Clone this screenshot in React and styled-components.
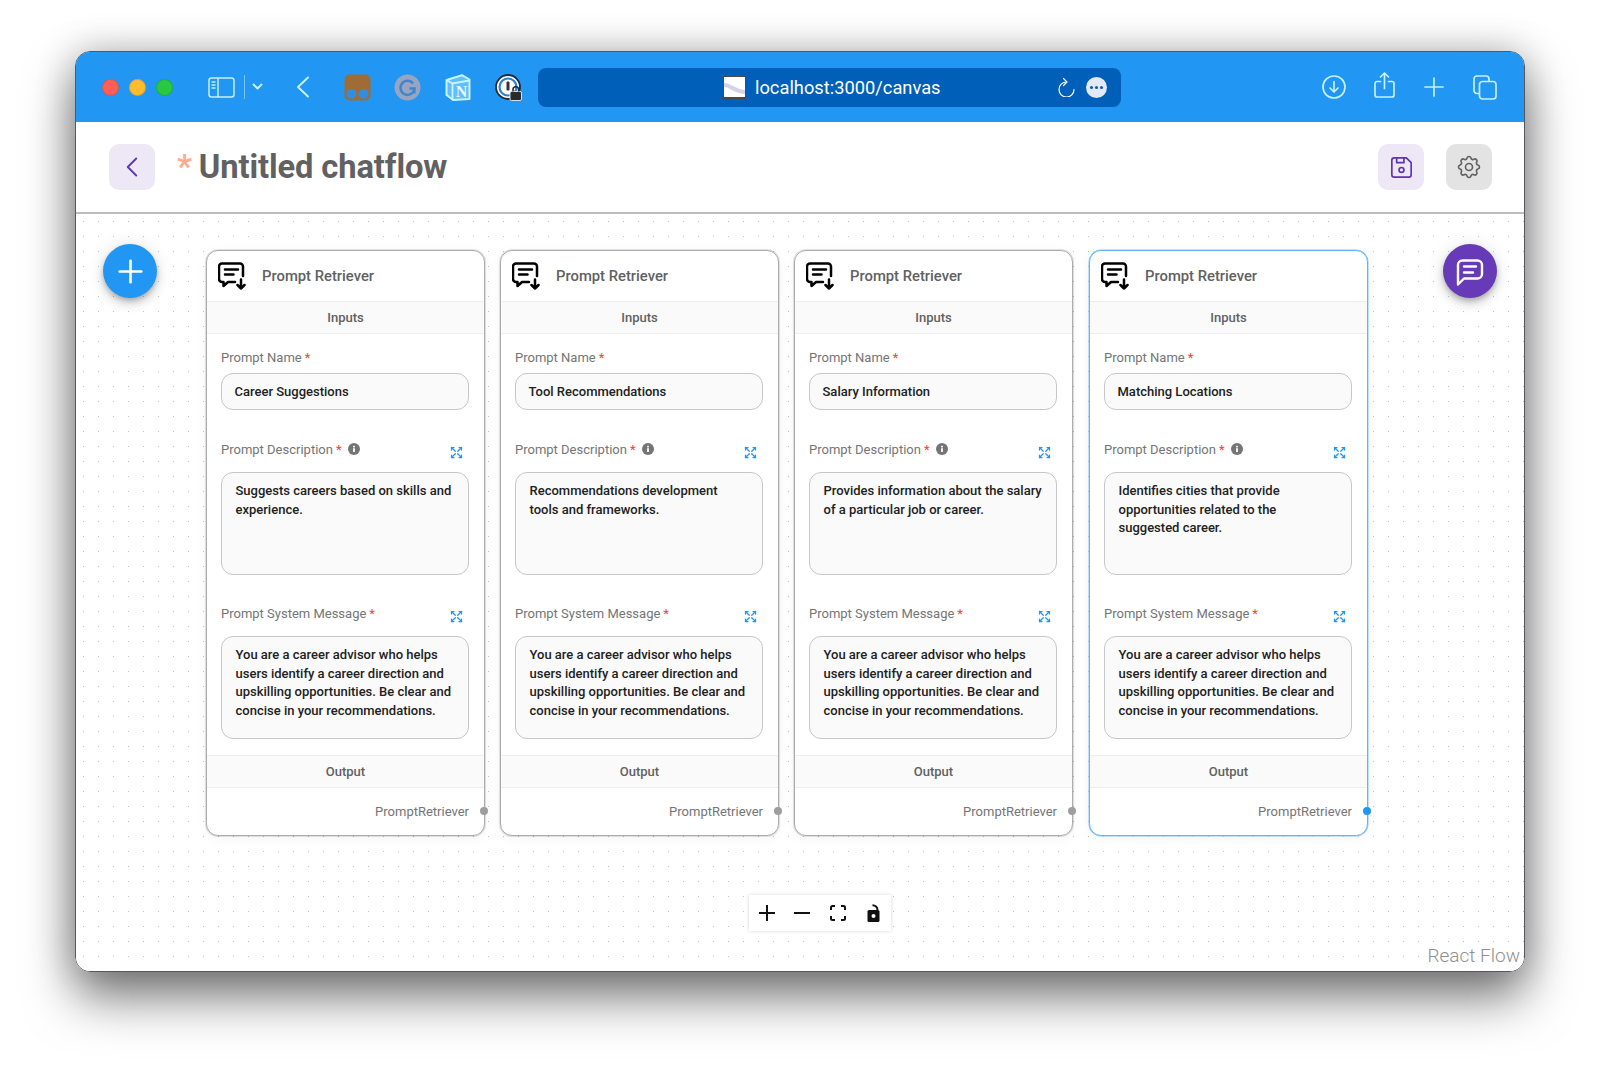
import React from 'react';
import styled, { createGlobalStyle } from 'styled-components';
import { TbArrowsMaximize, TbChevronLeft, TbDeviceFloppy, TbPlus, TbSettings } from 'react-icons/tb';

const GlobalStyle = createGlobalStyle`
  html, body {
    margin: 0;
    padding: 0;
    background: #ffffff;
  }
  body {
    font-family: Roboto, "Liberation Sans", sans-serif;
  }
  * {
    box-sizing: border-box;
  }
`;

const Page = styled.div`
  width: 1600px;
  height: 1071px;
  padding: 51px 0 0 75px;
  overflow: hidden;
`;

const WinShadow = styled.div`
  width: 1450px;
  height: 921px;
  border-radius: 15px;
  box-shadow: 0 26px 50px rgba(0, 0, 0, 0.5), 0 0 38px rgba(0, 0, 0, 0.24);
`;

const Win = styled.div`
  width: 1450px;
  height: 921px;
  display: flex;
  flex-direction: column;
  border: 1px solid #55595e;
  border-radius: 15px;
  overflow: hidden;
  background: #ffffff;
`;

const TitleBar = styled.div`
  height: 70px;
  flex: none;
  display: flex;
  align-items: center;
  padding-left: 26px;
  background: #2196f3;
  color: #c5f1ff;
`;

const Lights = styled.div`
  display: flex;
  gap: 10px;
  margin-right: 35px;
`;

const Light = styled.span`
  width: 17px;
  height: 17px;
  border-radius: 50%;
  background: ${(p) => p.$color};
  border: 1px solid rgba(0, 0, 0, 0.12);
`;

const ToolIcon = styled.div`
  display: flex;
  align-items: center;
  justify-content: center;
  flex: none;
  width: ${(p) => p.$w}px;
  margin-left: ${(p) => p.$ml || 0}px;
  margin-top: ${(p) => p.$mt || 0}px;
`;

const VDivider = styled.span`
  width: 1px;
  height: 24px;
  margin-left: 9px;
  background: rgba(201, 239, 255, 0.5);
`;

const AddressBar = styled.div`
  width: 583px;
  height: 39px;
  margin-left: 16px;
  flex: none;
  display: flex;
  align-items: center;
  padding-left: 185px;
  border-radius: 8px;
  background: #005fb8;
  color: #ffffff;
`;

const Favicon = styled.div`
  width: 23px;
  height: 23px;
  flex: none;
  margin-right: 9px;
  background: #ffffff;
  border: 1px solid #4a4a4a;
  border-bottom-width: 2px;
  overflow: hidden;
`;

const Url = styled.span`
  width: 303px;
  flex: none;
  font-size: 18.3px;
  white-space: nowrap;
`;

const MoreDots = styled.div`
  width: 21px;
  height: 21px;
  margin-left: 11px;
  border-radius: 50%;
  background: #e3e9f6;
  display: flex;
  align-items: center;
  justify-content: center;
  gap: 2px;
`;

const Dot = styled.span`
  width: 3px;
  height: 3px;
  border-radius: 50%;
  background: #005fb8;
`;

const HeaderBar = styled.div`
  height: 92px;
  flex: none;
  display: flex;
  align-items: center;
  padding: 0 32px 0 33px;
  border-bottom: 2px solid #bdbdbd;
  background: #ffffff;
`;

const SquareButton = styled.div`
  width: 46px;
  height: 46px;
  flex: none;
  margin-left: ${(p) => p.$ml || 0}px;
  display: flex;
  align-items: center;
  justify-content: center;
  border-radius: 10px;
  background: ${(p) => (p.$grey ? '#e3e3e3' : '#ede7f6')};
  color: ${(p) => (p.$grey ? '#616161' : '#5e35b1')};
`;

const Title = styled.h1`
  flex: 1;
  margin: 0 0 0 22px;
  font-size: 32.7px;
  line-height: 40px;
  font-weight: 700;
  color: #616161;
  letter-spacing: -0.1px;
  span {
    color: #ffab91;
    margin-right: 7px;
  }
`;

const Canvas = styled.div`
  position: relative;
  flex: 1;
  display: flex;
  gap: 15px;
  padding: 36px 0 0 130px;
  background-color: #ffffff;
  background-image: radial-gradient(circle at center, #c2c2c2 0.7px, transparent 1px);
  background-size: 15px 15px;
`;

const Fab = styled.div`
  position: absolute;
  top: 30px;
  ${(p) => (p.$right ? 'right: 27px;' : 'left: 27px;')}
  width: 54px;
  height: 54px;
  display: flex;
  align-items: center;
  justify-content: center;
  border-radius: 50%;
  background: ${(p) => (p.$right ? '#673ab7' : '#2196f3')};
  color: #ffffff;
  box-shadow: 0 3px 5px -1px rgba(0, 0, 0, 0.2), 0 6px 10px 0 rgba(0, 0, 0, 0.14), 0 1px 18px 0 rgba(0, 0, 0, 0.12);
`;

const Card = styled.div`
  position: relative;
  width: 279px;
  height: 586px;
  margin-left: ${(p) => (p.$selected ? 1 : 0)}px;
  flex: none;
  display: flex;
  flex-direction: column;
  border: 1px solid ${(p) => (p.$selected ? '#64b5f6' : '#acacac')};
  border-radius: 12px;
  background: #ffffff;
  box-shadow: ${(p) => (p.$selected ? '0 0 0 0.5px #90caf9' : '0 0 0 1px rgba(0, 0, 0, 0.1)')},
    0 2px 12px rgba(0, 0, 0, 0.05);
`;

const CardHeader = styled.div`
  height: 50px;
  flex: none;
  display: flex;
  align-items: center;
  padding: 0 0 0 11px;
  font-size: 14.8px;
  font-weight: 500;
  color: #616161;
`;

const CardName = styled.span`
  margin-left: 15px;
`;

const SectionBar = styled.div`
  height: 33px;
  flex: none;
  display: flex;
  align-items: center;
  justify-content: center;
  background: #fafafa;
  border-top: 1px solid #eeeeee;
  border-bottom: 1px solid #eeeeee;
  font-size: 13px;
  font-weight: 500;
  color: #616161;
`;

const Fields = styled.div`
  flex: 1;
  display: flex;
  flex-direction: column;
  padding: 13px 15px 16px 14px;
`;

const LabelRow = styled.div`
  height: 20px;
  display: flex;
  align-items: center;
  gap: 6px;
  margin-top: ${(p) => p.$mt || 0}px;
  margin-bottom: ${(p) => p.$mb}px;
  font-size: 13px;
  color: #757575;
`;

const Required = styled.span`
  color: #f44336;
  margin-left: 3px;
`;

const ExpandButton = styled.span`
  margin-left: auto;
  margin-right: 5px;
  margin-top: 6px;
  display: flex;
  color: #2196f3;
`;

const InputBox = styled.div`
  height: 37px;
  display: flex;
  align-items: center;
  padding: 0 12.5px;
  border: 1px solid #c7c7c7;
  border-radius: 12px;
  background: #fafafa;
  font-size: 13px;
  font-weight: 500;
  color: #212121;
`;

const TextBox = styled.div`
  height: 103px;
  padding: 9px 12.5px 9px 13.5px;
  border: 1px solid #c7c7c7;
  border-radius: 12px;
  background: #fafafa;
  font-size: 13px;
  line-height: 18.6px;
  font-weight: 500;
  color: #212121;
`;

const OutputRow = styled.div`
  flex: 1;
  display: flex;
  align-items: flex-start;
  justify-content: flex-end;
  padding: 15px 15px 0 0;
  font-size: 13px;
  line-height: 18px;
  color: #757575;
`;

const Handle = styled.span`
  position: absolute;
  right: -4px;
  bottom: 20px;
  width: 8px;
  height: 8px;
  border-radius: 50%;
  background: ${(p) => (p.$selected ? '#2196f3' : '#9e9e9e')};
`;

const Controls = styled.div`
  position: absolute;
  left: 673px;
  bottom: 40px;
  width: 142px;
  height: 36px;
  display: grid;
  grid-template-columns: repeat(4, 1fr);
  background: #ffffff;
  box-shadow: 0 0 4px rgba(0, 0, 0, 0.16);
`;

const ControlButton = styled.div`
  display: flex;
  align-items: center;
  justify-content: center;
`;

const Attribution = styled.div`
  position: absolute;
  right: 4px;
  bottom: 2px;
  font-size: 19px;
  line-height: 26px;
  font-weight: 300;
  color: #8f8f8f;
  background: rgba(255, 255, 255, 0.5);
`;

const SidebarIcon = () => (
  <svg width="27" height="21" viewBox="0 0 27 21" fill="none" stroke="currentColor" strokeWidth="1.5">
    <rect x="1" y="1" width="25" height="19" rx="2.5" />
    <path d="M10 1v19" />
    <path d="M3.5 5h4M3.5 8h4M3.5 11h4" strokeWidth="1.7" />
  </svg>
);

const SmallChevronDown = () => (
  <svg width="11" height="8" viewBox="0 0 11 8" fill="none" stroke="currentColor" strokeWidth="2" strokeLinecap="round" strokeLinejoin="round">
    <path d="M1.5 1.5l4 4 4-4" />
  </svg>
);

const BackIcon = () => (
  <svg width="14" height="22" viewBox="0 0 14 22" fill="none" stroke="currentColor" strokeWidth="2" strokeLinecap="round" strokeLinejoin="round">
    <path d="M12 1.5L2 11l10 9.5" />
  </svg>
);

const TabIcon = () => (
  <svg width="27" height="27" viewBox="0 0 27 27">
    <rect x="0.5" y="0.5" width="26" height="26" rx="5" fill="#a06c35" />
    <circle cx="7.500" cy="20" r="5" fill="#2f8ee0" />
    <circle cx="19.500" cy="20" r="5" fill="#2f8ee0" />
  </svg>
);

const GrammarlyIcon = () => (
  <svg width="27" height="27" viewBox="0 0 27 27" fill="none">
    <circle cx="13.500" cy="13.500" r="13" fill="#97a5c2" />
    <path d="M19 9.500a7 7 0 1 0 1.500 5h-5" stroke="#3f86cb" strokeWidth="2.500" />
    <path d="M20.500 14.500v5" stroke="#3f86cb" strokeWidth="2" />
  </svg>
);

const NotionIcon = () => (
  <svg width="26" height="27" viewBox="0 0 26 27" fill="none">
    <path d="M1.500 6L17 1.200l7.500 4.300v19.500L8 26l-6.500-5z" fill="#62bdfa" stroke="#c5f5ff" strokeWidth="2" strokeLinejoin="round" />
    <path d="M1.500 6L7.500 9.500 24.500 6.500M7.500 9.500V26" stroke="#c5f5ff" strokeWidth="1.800" />
    <text x="16.500" y="22.500" textAnchor="middle" fontFamily="Liberation Serif, serif" fontWeight="700" fontSize="16" fill="#e4fbff">N</text>
  </svg>
);

const OnePasswordIcon = () => (
  <svg width="27" height="27" viewBox="0 0 27 27" fill="none">
    <circle cx="13" cy="13" r="12" fill="#ffffff" stroke="#1c2a3c" strokeWidth="1.800" />
    <circle cx="13" cy="13" r="8.500" stroke="#2d7fd0" strokeWidth="2.200" />
    <rect x="11.500" y="7.500" width="3" height="9" rx="1" fill="#333333" />
    <rect x="15" y="17.500" width="11.500" height="9" rx="1.500" fill="#2a2a2a" stroke="#ffffff" strokeWidth="0.800" />
    <path d="M18 17.500V15.500a2.800 2.800 0 0 1 5.600 0v2" stroke="#2a2a2a" strokeWidth="1.600" />
  </svg>
);

const ReloadIcon = () => (
  <svg width="17" height="20" viewBox="0 0 17 20" fill="none" stroke="currentColor" strokeWidth="1.200" strokeLinecap="round" strokeLinejoin="round">
    <path d="M8.500 5A7.500 7.500 0 1 0 16 12.500" />
    <path d="M5.500 1.500L9 5 5.500 8.500" />
  </svg>
);

const DownloadIcon = () => (
  <svg width="24" height="24" viewBox="0 0 24 24" fill="none" stroke="currentColor" strokeWidth="1.700" strokeLinecap="round" strokeLinejoin="round">
    <circle cx="12" cy="12" r="11" />
    <path d="M12 6.500v10.500M8 13l4 4 4-4" />
  </svg>
);

const ShareIcon = () => (
  <svg width="21" height="26" viewBox="0 0 21 26" fill="none" stroke="currentColor" strokeWidth="1.700" strokeLinecap="round" strokeLinejoin="round">
    <path d="M6.500 9.500H3a2 2 0 0 0-2 2V23a2 2 0 0 0 2 2h15a2 2 0 0 0 2-2V11.500a2 2 0 0 0-2-2h-3.500" />
    <path d="M10.500 16.500V1.500M6.500 5l4-4 4 4" />
  </svg>
);

const NewTabIcon = () => (
  <svg width="20" height="20" viewBox="0 0 20 20" fill="none" stroke="currentColor" strokeWidth="1.700" strokeLinecap="round">
    <path d="M10 1v18M1 10h18" />
  </svg>
);

const TabsIcon = () => (
  <svg width="24" height="25" viewBox="0 0 24 25" fill="none" stroke="currentColor" strokeWidth="1.700">
    <rect x="6.500" y="6.500" width="16.500" height="17.500" rx="3" />
    <path d="M6.500 18.500H4a3 3 0 0 1-3-3V4a3 3 0 0 1 3-3h9a3 3 0 0 1 3 3v2.500" />
  </svg>
);

const ChatIcon = () => (
  <svg width="36" height="36" viewBox="0 0 24 24" fill="none" stroke="currentColor" strokeWidth="1.600" strokeLinecap="round" strokeLinejoin="round">
    <path d="M4 21v-13a3 3 0 0 1 3-3h10a3 3 0 0 1 3 3v6a3 3 0 0 1-3 3h-9l-4 4" />
    <path d="M8 9h8M8 13h6" />
  </svg>
);

const PromptIcon = () => (
  <svg width="29" height="28" viewBox="0 0 29 28" fill="none" stroke="#000000" strokeWidth="2.500" strokeLinecap="round" strokeLinejoin="round">
    <path d="M17 20H10l-4.500 4V20H4a3 3 0 0 1-3-3V4.500a3 3 0 0 1 3-3h18a3 3 0 0 1 3 3v9.500" />
    <path d="M7 7.500h13M7 12.500h8.500" />
    <path d="M23 17.500v9M19.500 23l3.500 3.500 3.500-3.500" />
  </svg>
);

const InfoIcon = () => (
  <svg width="12" height="12" viewBox="0 0 12 12">
    <circle cx="6" cy="6" r="6" fill="#757575" />
    <rect x="5.100" y="5.200" width="1.800" height="3.800" fill="#ffffff" />
    <rect x="5.100" y="2.800" width="1.800" height="1.600" fill="#ffffff" />
  </svg>
);

const ControlPlus = () => (
  <svg width="18" height="18" viewBox="0 0 18 18" stroke="#111111" strokeWidth="2">
    <path d="M9 1v16M1 9h16" />
  </svg>
);

const ControlMinus = () => (
  <svg width="18" height="18" viewBox="0 0 18 18" stroke="#111111" strokeWidth="2">
    <path d="M1 9h16" />
  </svg>
);

const ControlFit = () => (
  <svg width="16" height="16" viewBox="0 0 16 16" fill="none" stroke="#111111" strokeWidth="2">
    <path d="M1 5V2.500A1.500 1.500 0 0 1 2.500 1H5M11 1h2.500A1.500 1.500 0 0 1 15 2.500V5M15 11v2.500a1.500 1.500 0 0 1-1.500 1.500H11M5 15H2.500A1.500 1.500 0 0 1 1 13.500V11" />
  </svg>
);

const ControlLock = () => (
  <svg width="13" height="18" viewBox="0 0 13 18">
    <rect x="0.500" y="6" width="12" height="12" rx="1.500" fill="#111111" />
    <circle cx="6.500" cy="12" r="2" fill="#ffffff" />
    <path d="M5.500 1.200a5 5 0 0 1 5 4.800" fill="none" stroke="#111111" strokeWidth="2" />
  </svg>
);

const systemMessage =
  'You are a career advisor who helps users identify a career direction and upskilling opportunities. Be clear and concise in your recommendations.';

const nodes = [
  { name: 'Career Suggestions', description: 'Suggests careers based on skills and experience.' },
  { name: 'Tool Recommendations', description: 'Recommendations development tools and frameworks.' },
  { name: 'Salary Information', description: 'Provides information about the salary of a particular job or career.' },
  {
    name: 'Matching Locations',
    description: 'Identifies cities that provide opportunities related to the suggested career.',
    selected: true,
  },
];

const PromptNode = ({ name, description, selected }) => (
  <Card $selected={selected}>
    <CardHeader>
      <PromptIcon />
      <CardName>Prompt Retriever</CardName>
    </CardHeader>
    <SectionBar>Inputs</SectionBar>
    <Fields>
      <LabelRow $mb={6}>
        <span>
          Prompt Name<Required>*</Required>
        </span>
      </LabelRow>
      <InputBox>{name}</InputBox>
      <LabelRow $mt={29} $mb={13}>
        <span>
          Prompt Description<Required>*</Required>
        </span>
        <InfoIcon />
        <ExpandButton>
          <TbArrowsMaximize size={15} />
        </ExpandButton>
      </LabelRow>
      <TextBox>{description}</TextBox>
      <LabelRow $mt={28} $mb={13}>
        <span>
          Prompt System Message<Required>*</Required>
        </span>
        <ExpandButton>
          <TbArrowsMaximize size={15} />
        </ExpandButton>
      </LabelRow>
      <TextBox>{systemMessage}</TextBox>
    </Fields>
    <SectionBar>Output</SectionBar>
    <OutputRow>PromptRetriever</OutputRow>
    <Handle $selected={selected} />
  </Card>
);

const App = () => (
  <Page>
    <GlobalStyle />
    <WinShadow>
      <Win>
        <TitleBar>
          <Lights>
            <Light $color="#ff5f57" />
            <Light $color="#febc2e" />
            <Light $color="#28c840" />
          </Lights>
          <ToolIcon $w={27}>
            <SidebarIcon />
          </ToolIcon>
          <VDivider />
          <ToolIcon $w={11} $ml={7}>
            <SmallChevronDown />
          </ToolIcon>
          <ToolIcon $w={14} $ml={33}>
            <BackIcon />
          </ToolIcon>
          <ToolIcon $w={27} $ml={34}>
            <TabIcon />
          </ToolIcon>
          <ToolIcon $w={27} $ml={23}>
            <GrammarlyIcon />
          </ToolIcon>
          <ToolIcon $w={26} $ml={24}>
            <NotionIcon />
          </ToolIcon>
          <ToolIcon $w={27} $ml={24}>
            <OnePasswordIcon />
          </ToolIcon>
          <AddressBar>
            <Favicon>
              <svg width="21" height="20" viewBox="0 0 21 20" fill="none">
                <path d="M0 8c6-1 8 6 21 7" stroke="#d8cfe8" strokeWidth="4" />
              </svg>
            </Favicon>
            <Url>localhost:3000/canvas</Url>
            <ReloadIcon />
            <MoreDots>
              <Dot />
              <Dot />
              <Dot />
            </MoreDots>
          </AddressBar>
          <ToolIcon $w={24} $ml={201}>
            <DownloadIcon />
          </ToolIcon>
          <ToolIcon $w={21} $ml={28} $mt={-5}>
            <ShareIcon />
          </ToolIcon>
          <ToolIcon $w={20} $ml={29}>
            <NewTabIcon />
          </ToolIcon>
          <ToolIcon $w={24} $ml={29}>
            <TabsIcon />
          </ToolIcon>
        </TitleBar>
        <HeaderBar>
          <SquareButton>
            <TbChevronLeft size={34} strokeWidth={1.3} />
          </SquareButton>
          <Title>
            <span>*</span>Untitled chatflow
          </Title>
          <SquareButton>
            <TbDeviceFloppy size={29} strokeWidth={1.4} />
          </SquareButton>
          <SquareButton $grey $ml={22}>
            <TbSettings size={28} strokeWidth={1.4} />
          </SquareButton>
        </HeaderBar>
        <Canvas>
          <Fab>
            <TbPlus size={37} strokeWidth={1.7} />
          </Fab>
          <Fab $right>
            <ChatIcon />
          </Fab>
          {nodes.map((node) => (
            <PromptNode key={node.name} {...node} />
          ))}
          <Controls>
            <ControlButton>
              <ControlPlus />
            </ControlButton>
            <ControlButton>
              <ControlMinus />
            </ControlButton>
            <ControlButton>
              <ControlFit />
            </ControlButton>
            <ControlButton>
              <ControlLock />
            </ControlButton>
          </Controls>
          <Attribution>React Flow</Attribution>
        </Canvas>
      </Win>
    </WinShadow>
  </Page>
);

export default App;
